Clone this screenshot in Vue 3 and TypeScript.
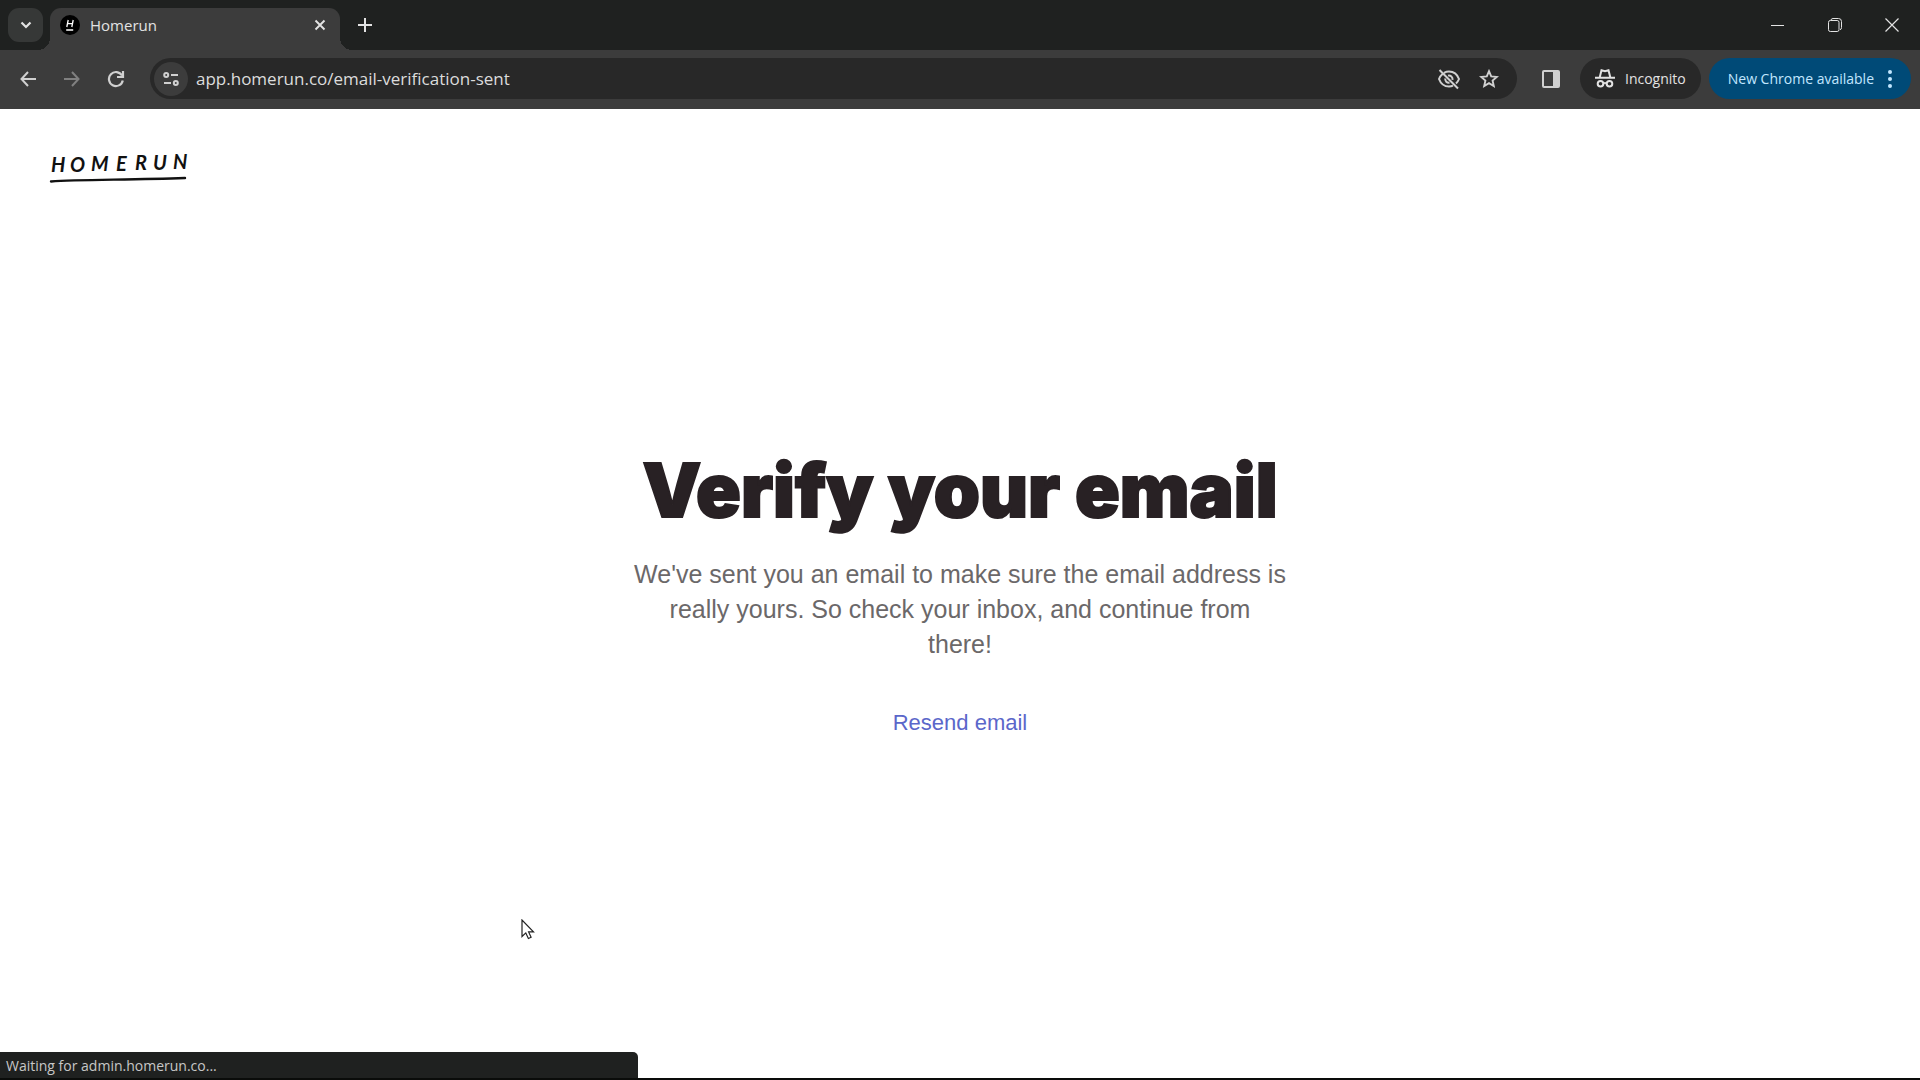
<script setup lang="ts">
import { ref } from 'vue'

const url = ref('app.homerun.co/email-verification-sent')
</script>

<template>
  <div class="window">
    <header class="title-bar">
      <button class="tab-search" type="button" aria-label="Search tabs">
        <svg width="12" height="8" viewBox="0 0 12 8"><path d="M1.5 1.5 6 6l4.500-4.500" fill="none" stroke="currentColor" stroke-width="2.200" /></svg>
      </button>
      <div class="tab">
        <svg class="favicon" width="20" height="20" viewBox="0 0 20 20">
          <circle cx="10" cy="10" r="10" fill="#000" />
          <path d="M8.200 5 6.800 12M13.200 5l-1.400 7M7.500 8.600h5M6.200 15h7" fill="none" stroke="#fff" stroke-width="1.300" />
        </svg>
        <span class="tab-title">Homerun</span>
        <button class="icon-button small" type="button" aria-label="Close tab">
          <svg width="12" height="12" viewBox="0 0 12 12"><path d="m1.500 1.500 9 9m0-9-9 9" stroke="currentColor" stroke-width="1.900" /></svg>
        </button>
      </div>
      <button class="icon-button new-tab" type="button" aria-label="New tab">
        <svg width="14" height="14" viewBox="0 0 14 14"><path d="M7 0v14M0 7h14" stroke="currentColor" stroke-width="2" /></svg>
      </button>
      <div class="window-controls">
        <button type="button" aria-label="Minimize">
          <svg width="14" height="14" viewBox="0 0 14 14"><path d="M0 7.500h13" stroke="currentColor" /></svg>
        </button>
        <button type="button" aria-label="Restore">
          <svg width="14" height="14" viewBox="0 0 14 14" fill="none" stroke="currentColor"><rect x=".5" y="2.500" width="10.500" height="11" rx="1.800" /><path d="M2.800 2.300Q3.200.5 5 .5h5.500q3 0 3 3v6q0 1.800-1.500 2.300" /></svg>
        </button>
        <button type="button" aria-label="Close">
          <svg width="14" height="14" viewBox="0 0 14 14"><path d="m.5.5 13 13m0-13-13 13" stroke="currentColor" stroke-width="1.200" /></svg>
        </button>
      </div>
    </header>

    <nav class="toolbar" aria-label="Browser toolbar">
      <button class="icon-button" type="button" aria-label="Back">
        <svg width="16" height="16" viewBox="0 0 16 16"><path d="M8 1 1.500 8 8 15M2 8h14" fill="none" stroke="currentColor" stroke-width="2" /></svg>
      </button>
      <button class="icon-button" type="button" aria-label="Forward" disabled>
        <svg width="16" height="16" viewBox="0 0 16 16"><path d="m8 1 6.500 7L8 15m6-7H0" fill="none" stroke="currentColor" stroke-width="2" /></svg>
      </button>
      <button class="icon-button" type="button" aria-label="Reload">
        <svg width="18" height="18" viewBox="0 0 18 18"><path d="M15 5.500A7 7 0 1 0 15.800 10.500M16 1v6h-6" fill="none" stroke="currentColor" stroke-width="2.200" /></svg>
      </button>
      <div class="address-bar">
        <button class="site-info" type="button" aria-label="View site information">
          <svg width="16" height="14" viewBox="0 0 16 14" fill="none" stroke="currentColor" stroke-width="2"><circle cx="3.200" cy="3" r="2" /><path d="M8 3h7M1 11h7" /><circle cx="12.800" cy="11" r="2" /></svg>
        </button>
        <input v-model="url" type="text" aria-label="Address and search bar" spellcheck="false" />
        <button class="icon-button wide" type="button" aria-label="Third-party cookies blocked">
          <svg width="24" height="22" viewBox="0 0 24 22" fill="none" stroke="currentColor" stroke-width="2"><path d="M7 4.800C8.500 4 10.200 3.500 12 3.500c4.500 0 8.300 2.900 10 7.500-.7 1.800-1.700 3.300-3 4.500M16 17.600c-1.200.6-2.600.9-4 .9-4.500 0-8.300-2.900-10-7.500.8-2 2-3.700 3.500-5M2.500 2 21 20.500M11 7.600c2.500-.6 5 1.500 4.500 4.300M8.300 10.500c-.5 2.500 1.700 4.700 4.200 4.200" /></svg>
        </button>
        <button class="icon-button wide" type="button" aria-label="Bookmark this tab">
          <svg width="20" height="20" viewBox="0 0 20 20"><path d="m10 2.200 2.200 5.200 5.600.5-4.200 3.700 1.200 5.500L10 14.200 5.200 17.100l1.200-5.500-4.200-3.700 5.600-.5z" fill="none" stroke="currentColor" stroke-width="1.900" /></svg>
        </button>
      </div>
      <button class="icon-button side-panel" type="button" aria-label="Side panel">
        <svg width="18" height="18" viewBox="0 0 18 18"><rect x="1" y="1" width="16" height="16" rx="1" fill="none" stroke="currentColor" stroke-width="2" /><path d="M11 1h6v16h-6z" fill="currentColor" /></svg>
      </button>
      <button class="incognito" type="button">
        <svg width="20" height="19" viewBox="0 0 20 19" fill="none" stroke="currentColor" stroke-width="2"><path d="M0 8.700h20M4.800 8 6.500 1.300 10 2.300l3.500-1L15.200 8M9 14.500q1-.8 2 0" /><circle cx="5.500" cy="14.700" r="2.800" /><circle cx="14.500" cy="14.700" r="2.800" /></svg>
        <span>Incognito</span>
      </button>
      <button class="update" type="button">
        <span>New Chrome available</span>
        <svg width="4" height="18" viewBox="0 0 4 18" fill="currentColor"><circle cx="2" cy="2" r="2" /><circle cx="2" cy="9" r="2" /><circle cx="2" cy="16" r="2" /></svg>
      </button>
    </nav>

    <div class="page">
      <div class="page-header">
        <a class="logo" href="#" aria-label="Homerun">
          <svg width="144" height="36" viewBox="0 0 144 36">
            <text x="2 21 42 67 86 104 124" y="22 22 21 21 20 20 19">HOMERUN</text>
            <path d="M2 31.500C30 29.500 80 30 136 28" fill="none" stroke="#111" stroke-width="2.400" stroke-linecap="round" />
          </svg>
        </a>
      </div>
      <main>
        <h1>Verify your email</h1>
        <p>
          We've sent you an email to make sure the email address is<br />
          really yours. So check your inbox, and continue from<br />
          there!
        </p>
        <a class="resend" href="#">Resend email</a>
      </main>
      <svg class="pointer" width="14" height="22" viewBox="0 0 14 22"><path d="M1 1v16.500l3.800-3.600 2.600 5.600 2.700-1.200-2.500-5.400H12.500z" fill="#fff" stroke="#222" stroke-width="1.200" /></svg>
      <div class="status" role="status">Waiting for admin.homerun.co...</div>
    </div>
  </div>
</template>

<style>
body {
  margin: 0;
}
</style>

<style scoped>
.window {
  display: flex;
  flex-direction: column;
  min-height: 100vh;
  box-sizing: border-box;
  border-bottom: 2px solid #0a0c0a;
  font-family: "Open Sans", "Noto Sans", sans-serif;
  background: #fff;
}

button {
  display: flex;
  align-items: center;
  justify-content: center;
  padding: 0;
  border: 0;
  background: none;
  color: inherit;
  font: inherit;
}

button svg {
  flex: none;
}

.title-bar {
  display: flex;
  align-items: flex-start;
  height: 50px;
  background: #1f2120;
  color: #e3e3e3;
}

.tab-search {
  width: 35px;
  height: 34px;
  margin: 8px 7px 0 8px;
  border-radius: 11px;
  background: #363837;
}

.tab {
  position: relative;
  display: flex;
  align-items: center;
  box-sizing: border-box;
  width: 290px;
  height: 42px;
  margin-top: 8px;
  padding: 0 8px 8px 10px;
  border-radius: 11px 11px 0 0;
  background: #3c3c3c;
  font-size: 15px;
}

.tab::before,
.tab::after {
  content: "";
  position: absolute;
  bottom: 0;
  width: 12px;
  height: 12px;
}

.tab::before {
  right: 100%;
  background: radial-gradient(circle at 0 0, transparent 12px, #3c3c3c 12px);
}

.tab::after {
  left: 100%;
  background: radial-gradient(circle at 100% 0, transparent 12px, #3c3c3c 12px);
}

.tab-title {
  flex: 1;
  margin-left: 10px;
}

.icon-button {
  width: 36px;
  height: 36px;
}

.icon-button.small {
  width: 24px;
  height: 24px;
}

.icon-button.wide {
  width: 40px;
}

.icon-button:disabled {
  color: #808080;
}

.new-tab {
  margin: 7px 0 0 7px;
}

.window-controls {
  display: flex;
  margin-left: auto;
}

.window-controls button {
  width: 57px;
  height: 49px;
}

.toolbar {
  display: flex;
  align-items: center;
  gap: 8px;
  box-sizing: border-box;
  height: 59px;
  padding: 0 9px 2px 10px;
  background: #3c3c3c;
  color: #d0d0d0;
  font-size: 14px;
}

.address-bar {
  display: flex;
  flex: 1;
  align-items: center;
  box-sizing: border-box;
  height: 41px;
  margin-left: 8px;
  padding: 0 8px 0 4px;
  border-radius: 21px;
  background: #282828;
}

.site-info {
  width: 34px;
  height: 34px;
  border-radius: 50%;
  background: #3c3c3c;
}

.address-bar input {
  flex: 1;
  min-width: 0;
  margin-left: 8px;
  padding: 0;
  border: 0;
  outline: 0;
  background: none;
  color: #dcdcdc;
  font: inherit;
  font-size: 17px;
}

.side-panel {
  margin: 0 3px 0 8px;
}

.incognito,
.update {
  height: 41px;
  border-radius: 21px;
}

.incognito {
  gap: 10px;
  padding: 0 15px;
  background: #282828;
  color: #e3e3e3;
}

.update {
  gap: 14px;
  padding: 0 19px;
  background: #004a77;
  color: #c2e7ff;
}

.page {
  position: relative;
  display: grid;
  flex: 1;
  grid-template-rows: 1fr auto 1fr;
}

.page-header {
  padding: 41px 49px;
}

.logo {
  display: inline-block;
}

.logo svg {
  display: block;
}

.logo text {
  fill: #111;
  font: italic 700 20px Lato, sans-serif;
}

main {
  padding: 0 24px;
  font-family: "Liberation Sans", Arial, sans-serif;
  text-align: center;
}

h1 {
  margin: 0;
  color: #282124;
  font: 900 74px/80px Inter, sans-serif;
  -webkit-text-stroke: 2px #282124;
}

p {
  margin: 27px 0 46px;
  color: #6b6869;
  font-size: 25px;
  line-height: 35px;
}

.resend {
  display: inline-block;
  color: #5b67ca;
  font-size: 22px;
  line-height: 30px;
  text-decoration: none;
}

.pointer {
  position: absolute;
  top: 810px;
  left: 521px;
}

.status {
  position: absolute;
  bottom: 0;
  left: 0;
  box-sizing: border-box;
  width: 638px;
  max-width: 100%;
  padding: 1px 6px 0;
  border-radius: 0 5px 0 0;
  background: #1f2120;
  color: #c7c7c7;
  font-size: 14px;
  line-height: 25px;
}
</style>
